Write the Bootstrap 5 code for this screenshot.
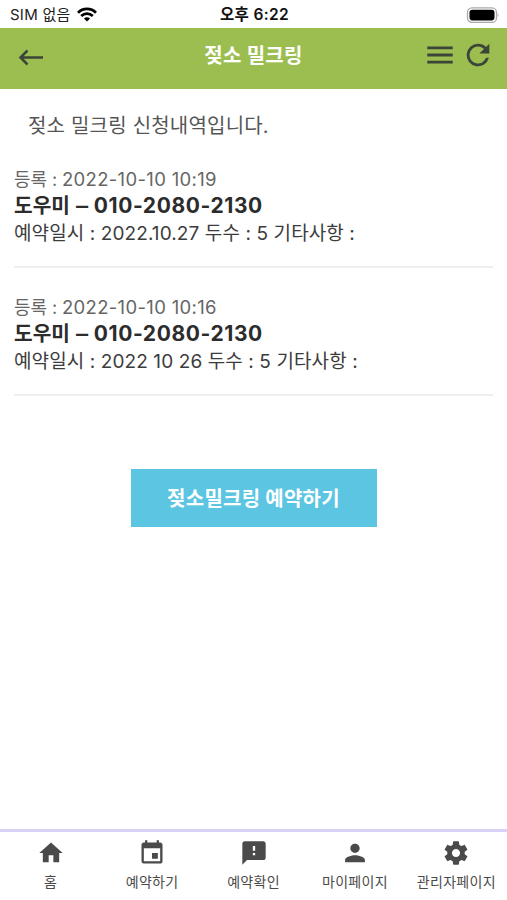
<!DOCTYPE html>
<html lang="ko">
<head>
<meta charset="utf-8">
<meta name="viewport" content="width=device-width, initial-scale=1">
<title>젖소 밀크링</title>
<link href="https://cdn.jsdelivr.net/npm/bootstrap@5.3.0/dist/css/bootstrap.min.css" rel="stylesheet">
<style>
body{font-family:Inter,"Noto Sans CJK KR",sans-serif;color:#333;height:900px;overflow:hidden}
svg{display:block;flex:none}
.status-bar{height:28px;color:#222;font-size:15px;line-height:28px;padding:1px 8px 0 10px}
.side{flex:1 1 0}
.sim{letter-spacing:.25px}
.status-left{gap:6px}
.status-time{color:#111;font-size:15.5px;font-weight:600;letter-spacing:.35px}
.app-header{height:60.5px;background:#9cbe51;color:#3c4638;padding:0 12px 6px}
.back-icon{margin:5px 0 0 6px}
.app-title{font-size:20px;line-height:30px;letter-spacing:.3px;padding-top:2px}
.content{padding:0 14px}
.intro{font-size:20px;line-height:30px;letter-spacing:.2px;color:#555;padding:22px 14px 0;margin-bottom:25px}
.entry{height:102px;border-bottom:2px solid #eee;margin-bottom:26px}
.entry-date{font-size:18.5px;line-height:26px;color:#666}
.entry-date .label{font-size:18px;letter-spacing:-.1px}
.entry-date .stamp{letter-spacing:.33px}
.entry-name{height:26px;font-size:20.3px;line-height:26px;color:#2c2c2c;word-spacing:.8px}
.dash{display:inline-block;transform:scaleX(1.2);margin:0 1.2px}
.phone{font-size:21px;font-weight:650;letter-spacing:.6px}
.entry-info{font-size:19px;line-height:29px;letter-spacing:.1px;color:#3c3c3c}
.btn-reserve{width:246px;height:58px;margin-top:47px;padding:8px 0 6px;font-size:20px;letter-spacing:.25px;--bs-btn-color:#fff;--bs-btn-bg:#5bc5e2;--bs-btn-border-color:#5bc5e2;--bs-btn-hover-bg:#45b5d4;--bs-btn-hover-color:#fff}
.tab-bar{height:71px;border-top:3px solid #d9d1f5;color:#4a4a4a}
.tab-bar .nav-link{flex:1 1 0;min-width:0;padding:6.5px 0 0;color:inherit;font-size:14px;line-height:20px;letter-spacing:.3px;white-space:nowrap}
.tab-bar .nav-link svg{margin-bottom:5px}
</style>
<script src="https://cdn.jsdelivr.net/npm/bootstrap@5.3.0/dist/js/bootstrap.bundle.min.js"></script>
</head>
<body class="d-flex flex-column bg-white">
<div class="status-bar d-flex align-items-center">
  <div class="side status-left d-flex align-items-center"><span class="sim">SIM 없음</span>
    <svg width="20" height="15" viewBox="0 0 20 15" fill="none" stroke="#000" stroke-width="2.7"><path d="M1 5.7C6 .7 14 .7 19 5.7M4.2 9C7.6 5.8 12.4 5.8 15.8 9"/><path d="M10 14.6 6.9 11.5Q10 8.8 13.1 11.5Z" fill="#000" stroke="none"/></svg>
  </div>
  <div class="status-time"><span>오후 6:22</span></div>
  <div class="side d-flex justify-content-end">
    <svg width="33" height="16" viewBox="0 0 33 16"><rect x="1.5" y=".8" width="29" height="14.6" rx="4.5" fill="#fff" stroke="#aaa" stroke-width="1.3"/><rect x="3.5" y="2.8" width="25" height="10.6" rx="2.8" fill="#000"/><path d="M31.7 6q1.6 2 0 4z" fill="#aaa"/></svg>
  </div>
</div>
<header class="app-header d-flex align-items-center">
  <div class="side"><svg class="back-icon" width="26" height="18" viewBox="0 0 26 18" fill="none" stroke="currentColor" stroke-width="2.5"><path d="M25 8.5H2.5M9.500 1.500 2.500 8.500l7 7"/></svg></div>
  <div class="app-title fw-bold text-white"><span>젖소 밀크링</span></div>
  <div class="side d-flex justify-content-end gap-1">
    <svg width="34" height="34" viewBox="0 0 24 24" fill="currentColor"><path d="M3 18h18v-2H3v2zm0-5h18v-2H3v2zm0-7v2h18V6H3z"/></svg>
    <svg width="34" height="34" viewBox="0 0 24 24" fill="currentColor"><path d="M17.65 6.35A7.96 7.96 0 0 0 12 4a8 8 0 1 0 7.73 10h-2.08A6 6 0 1 1 12 6c1.66 0 3.14.69 4.22 1.78L13 11h7V4z"/></svg>
  </div>
</header>
<main class="flex-grow-1 content">
  <p class="intro"><span>젖소 밀크링 신청내역입니다.</span></p>
  <article class="entry">
    <div class="entry-date"><span class="label">등록 : </span><span class="stamp">2022-10-10 10:19</span></div>
    <div class="entry-name fw-bold">도우미 <span class="dash">–</span> <span class="phone">010-2080-2130</span></div>
    <div class="entry-info"><span>예약일시 : 2022.10.27 두수 : 5 기타사항 :</span></div>
  </article>
  <article class="entry">
    <div class="entry-date"><span class="label">등록 : </span><span class="stamp">2022-10-10 10:16</span></div>
    <div class="entry-name fw-bold">도우미 <span class="dash">–</span> <span class="phone">010-2080-2130</span></div>
    <div class="entry-info"><span>예약일시 : 2022 10 26 두수 : 5 기타사항 :</span></div>
  </article>
  <div class="text-center"><button type="button" class="btn btn-reserve rounded-0 fw-bold"><span>젖소밀크링 예약하기</span></button></div>
</main>
<nav class="tab-bar nav flex-nowrap">
  <a class="nav-link d-flex flex-column align-items-center" href="#"><svg width="28" height="28" viewBox="0 0 24 24" fill="currentColor"><path d="M10 20v-6h4v6h5v-8h3L12 3 2 12h3v8z"/></svg><span>홈</span></a>
  <a class="nav-link d-flex flex-column align-items-center" href="#"><svg width="28" height="28" viewBox="0 0 24 24" fill="currentColor"><path d="M17 12h-5v5h5v-5zM16 1v2H8V1H6v2H5c-1.11 0-2 .9-2 2v14a2 2 0 0 0 2 2h14c1.1 0 2-.9 2-2V5c0-1.1-.9-2-2-2h-1V1h-2zm3 18H5V8h14v11z"/></svg><span>예약하기</span></a>
  <a class="nav-link d-flex flex-column align-items-center" href="#"><svg width="28" height="28" viewBox="0 0 24 24" fill="currentColor"><path d="M20 2H4c-1.1 0-2 .9-2 2v18l4-4h14c1.1 0 2-.9 2-2V4c0-1.1-.9-2-2-2zm-7 12h-2v-2h2v2zm0-4h-2V6h2v4z"/></svg><span>예약확인</span></a>
  <a class="nav-link d-flex flex-column align-items-center" href="#"><svg width="28" height="28" viewBox="0 0 24 24" fill="currentColor"><path d="M12 12c2.21 0 4-1.79 4-4s-1.79-4-4-4-4 1.79-4 4 1.79 4 4 4zm0 2c-2.67 0-8.5 1.34-8.5 4v2h17v-2c0-2.66-5.83-4-8.5-4z"/></svg><span>마이페이지</span></a>
  <a class="nav-link d-flex flex-column align-items-center" href="#"><svg width="28" height="28" viewBox="0 0 24 24" fill="currentColor"><path d="M19.43 12.98c.04-.32.07-.64.07-.98s-.03-.66-.07-.98l2.11-1.65c.19-.15.24-.42.12-.64l-2-3.46c-.12-.22-.39-.3-.61-.22l-2.49 1c-.52-.4-1.08-.73-1.69-.98l-.38-2.65C14.46 2.18 14.25 2 14 2h-4c-.25 0-.46.18-.49.42l-.38 2.65c-.61.25-1.17.59-1.69.98l-2.49-1c-.23-.09-.49 0-.61.22l-2 3.46c-.13.22-.07.49.12.64l2.11 1.65c-.04.32-.07.65-.07.98s.03.66.07.98l-2.11 1.65c-.19.15-.24.42-.12.64l2 3.46c.12.22.39.3.61.22l2.49-1c.52.4 1.08.73 1.69.98l.38 2.65c.03.24.24.42.49.42h4c.25 0 .46-.18.49-.42l.38-2.65c.61-.25 1.17-.59 1.69-.98l2.49 1c.23.09.49 0 .61-.22l2-3.46c.12-.22.07-.49-.12-.64l-2.11-1.65zM12 15.5c-1.93 0-3.5-1.57-3.5-3.5s1.57-3.5 3.5-3.5 3.5 1.57 3.5 3.5-1.57 3.5-3.5 3.5z"/></svg><span>관리자페이지</span></a>
</nav>
</body>
</html>
